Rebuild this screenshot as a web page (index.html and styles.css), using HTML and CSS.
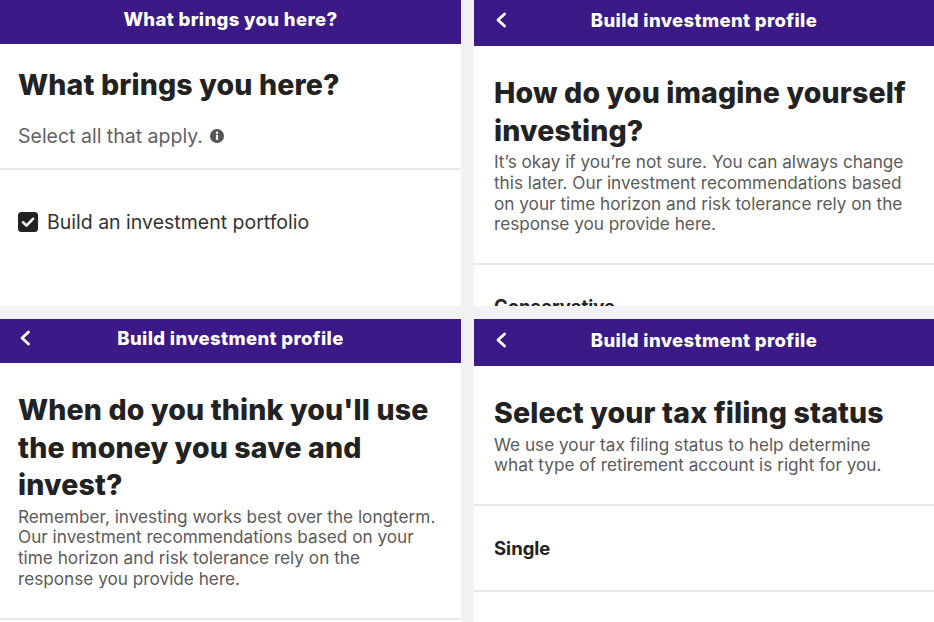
FILE: index.html
```html
<!DOCTYPE html>
<html lang="en">
  <head>
    <meta charset="UTF-8" />
    <meta name="viewport" content="width=device-width, initial-scale=1.0" />
    <title>Build investment profile</title>
    <link rel="stylesheet" href="styles.css">
  </head>
  <body>
    <main class="grid">
      <!-- screen 1 -->
      <section class="panel panel-left">
        <header class="bar bar-short">
          <span></span>
          <span class="bar-title">What brings you here?</span>
          <span></span>
        </header>
        <div class="intro intro-first">
          <h1>What brings you here?</h1>
          <p class="hint">Select all that apply.
            <svg class="info" viewBox="0 0 14 14" width="14" height="14">
              <circle cx="7" cy="7" r="7" fill="#555" />
              <circle cx="7" cy="3.8" r="1.2" fill="#fff" />
              <rect x="5.9" y="5.8" width="2.2" height="5.2" rx="0.6" fill="#fff" />
            </svg>
          </p>
        </div>
        <div class="row row-check">
          <span class="box">
            <svg viewBox="0 0 20 20" width="20" height="20">
              <rect x="0" y="0" width="20" height="20" rx="3.5" fill="#222" />
              <path d="M5 10.3 L8.5 13.6 L15 6.8" fill="none" stroke="#fff" stroke-width="2.6" stroke-linecap="round" stroke-linejoin="round" />
            </svg>
          </span>
          Build an investment portfolio
        </div>
      </section>

      <!-- screen 2 -->
      <section class="panel panel-right">
        <header class="bar">
          <span class="back"><svg viewBox="0 0 12 16" width="12" height="16"><path d="M9.5 2 L3 8 L9.5 14" fill="none" stroke="#fff" stroke-width="2.8" stroke-linecap="round" stroke-linejoin="round" /></svg></span>
          <span class="bar-title">Build investment profile</span>
          <span></span>
        </header>
        <div class="intro">
          <h1>How do you imagine yourself investing?</h1>
          <p>It’s okay if you’re not sure. You can always change this later. Our investment recommendations based on your time horizon and risk tolerance rely on the response you provide here.</p>
        </div>
        <div class="row row-option row-cut">Conservative</div>
      </section>

      <!-- screen 3 -->
      <section class="panel panel-left">
        <header class="bar bar-short">
          <span class="back"><svg viewBox="0 0 12 16" width="12" height="16"><path d="M9.5 2 L3 8 L9.5 14" fill="none" stroke="#fff" stroke-width="2.8" stroke-linecap="round" stroke-linejoin="round" /></svg></span>
          <span class="bar-title">Build investment profile</span>
          <span></span>
        </header>
        <div class="intro">
          <h1>When do you think you'll use the money you save and invest?</h1>
          <p class="wide">Remember, investing works best over the longterm. Our investment recommendations based on your time horizon and risk tolerance rely on the response you provide here.</p>
        </div>
        <div class="row"></div>
      </section>

      <!-- screen 4 -->
      <section class="panel panel-right">
        <header class="bar bar-tall">
          <span class="back"><svg viewBox="0 0 12 16" width="12" height="16"><path d="M9.5 2 L3 8 L9.5 14" fill="none" stroke="#fff" stroke-width="2.8" stroke-linecap="round" stroke-linejoin="round" /></svg></span>
          <span class="bar-title">Build investment profile</span>
          <span></span>
        </header>
        <div class="intro">
          <h1>Select your tax filing status</h1>
          <p class="narrow">We use your tax filing status to help determine what type of retirement account is right for you.</p>
        </div>
        <div class="row row-option">Single</div>
        <div class="row"></div>
      </section>
    </main>
  </body>
</html>
```

FILE: styles.css
```css
* {
  box-sizing: border-box;
}

body {
  margin: 0;
  background-color: #f2f1f4;
  font-family: "Inter", "Noto Sans", sans-serif;
}

.grid {
  display: grid;
  grid-template-columns: 461px 460px;
  grid-template-rows: 306px 303px;
  gap: 13px;
  width: 934px;
  height: 622px;
}

.panel {
  background-color: white;
  overflow: hidden;
  display: flex;
  flex-direction: column;
}

.panel-left {
  --pad: 18px;
}

.panel-right {
  --pad: 20px;
}

/* purple top bar */
.bar {
  flex: none;
  height: 46px;
  background-color: #3b1987;
  display: grid;
  grid-template-columns: 1fr auto 1fr;
  align-items: center;
  padding: 0 var(--pad);
  padding-bottom: 6px;
}

.bar-short {
  height: 44px;
}

.bar-tall {
  height: 47px;
}

.bar-title {
  color: white;
  font-weight: 800;
  font-size: 18.5px;
  letter-spacing: 0.35px;
}

.back {
  display: flex;
  align-items: center;
  padding-left: 1px;
}

/* heading + text */
.intro {
  padding: 28px var(--pad) 28px;
}

.intro-first {
  padding-top: 22px;
  padding-bottom: 20px;
}

h1 {
  margin: 0;
  font-size: 28.5px;
  line-height: 37.5px;
  font-weight: 800;
  letter-spacing: 0.15px;
  color: #222;
}

.intro p {
  margin: 3px 0 0;
  font-size: 17.2px;
  line-height: 20.8px;
  color: #5b5b5b;
  padding-right: 4px;
}

.intro p.wide {
  padding-right: 5px;
}

.intro p.narrow {
  padding-right: 14px;
}

.intro-first h1 {
  margin-bottom: 20px;
}

.intro .hint {
  font-size: 19.5px;
  line-height: 24px;
  color: #626262;
  display: flex;
  align-items: center;
  gap: 7px;
}

.info {
  margin-top: 1px;
}

/* option rows */
.row {
  flex: none;
  border-top: 2px solid #e8e7eb;
  padding: 0 var(--pad);
}

.row-check {
  height: 106px;
  display: flex;
  align-items: center;
  gap: 9px;
  font-size: 19.5px;
  color: #333;
}

.box {
  display: flex;
}

.row-option {
  height: 86px;
  display: flex;
  align-items: center;
  font-size: 18.5px;
  font-weight: 700;
  color: #222;
}

.row-cut {
  align-items: flex-start;
  padding-top: 30px;
}
```
